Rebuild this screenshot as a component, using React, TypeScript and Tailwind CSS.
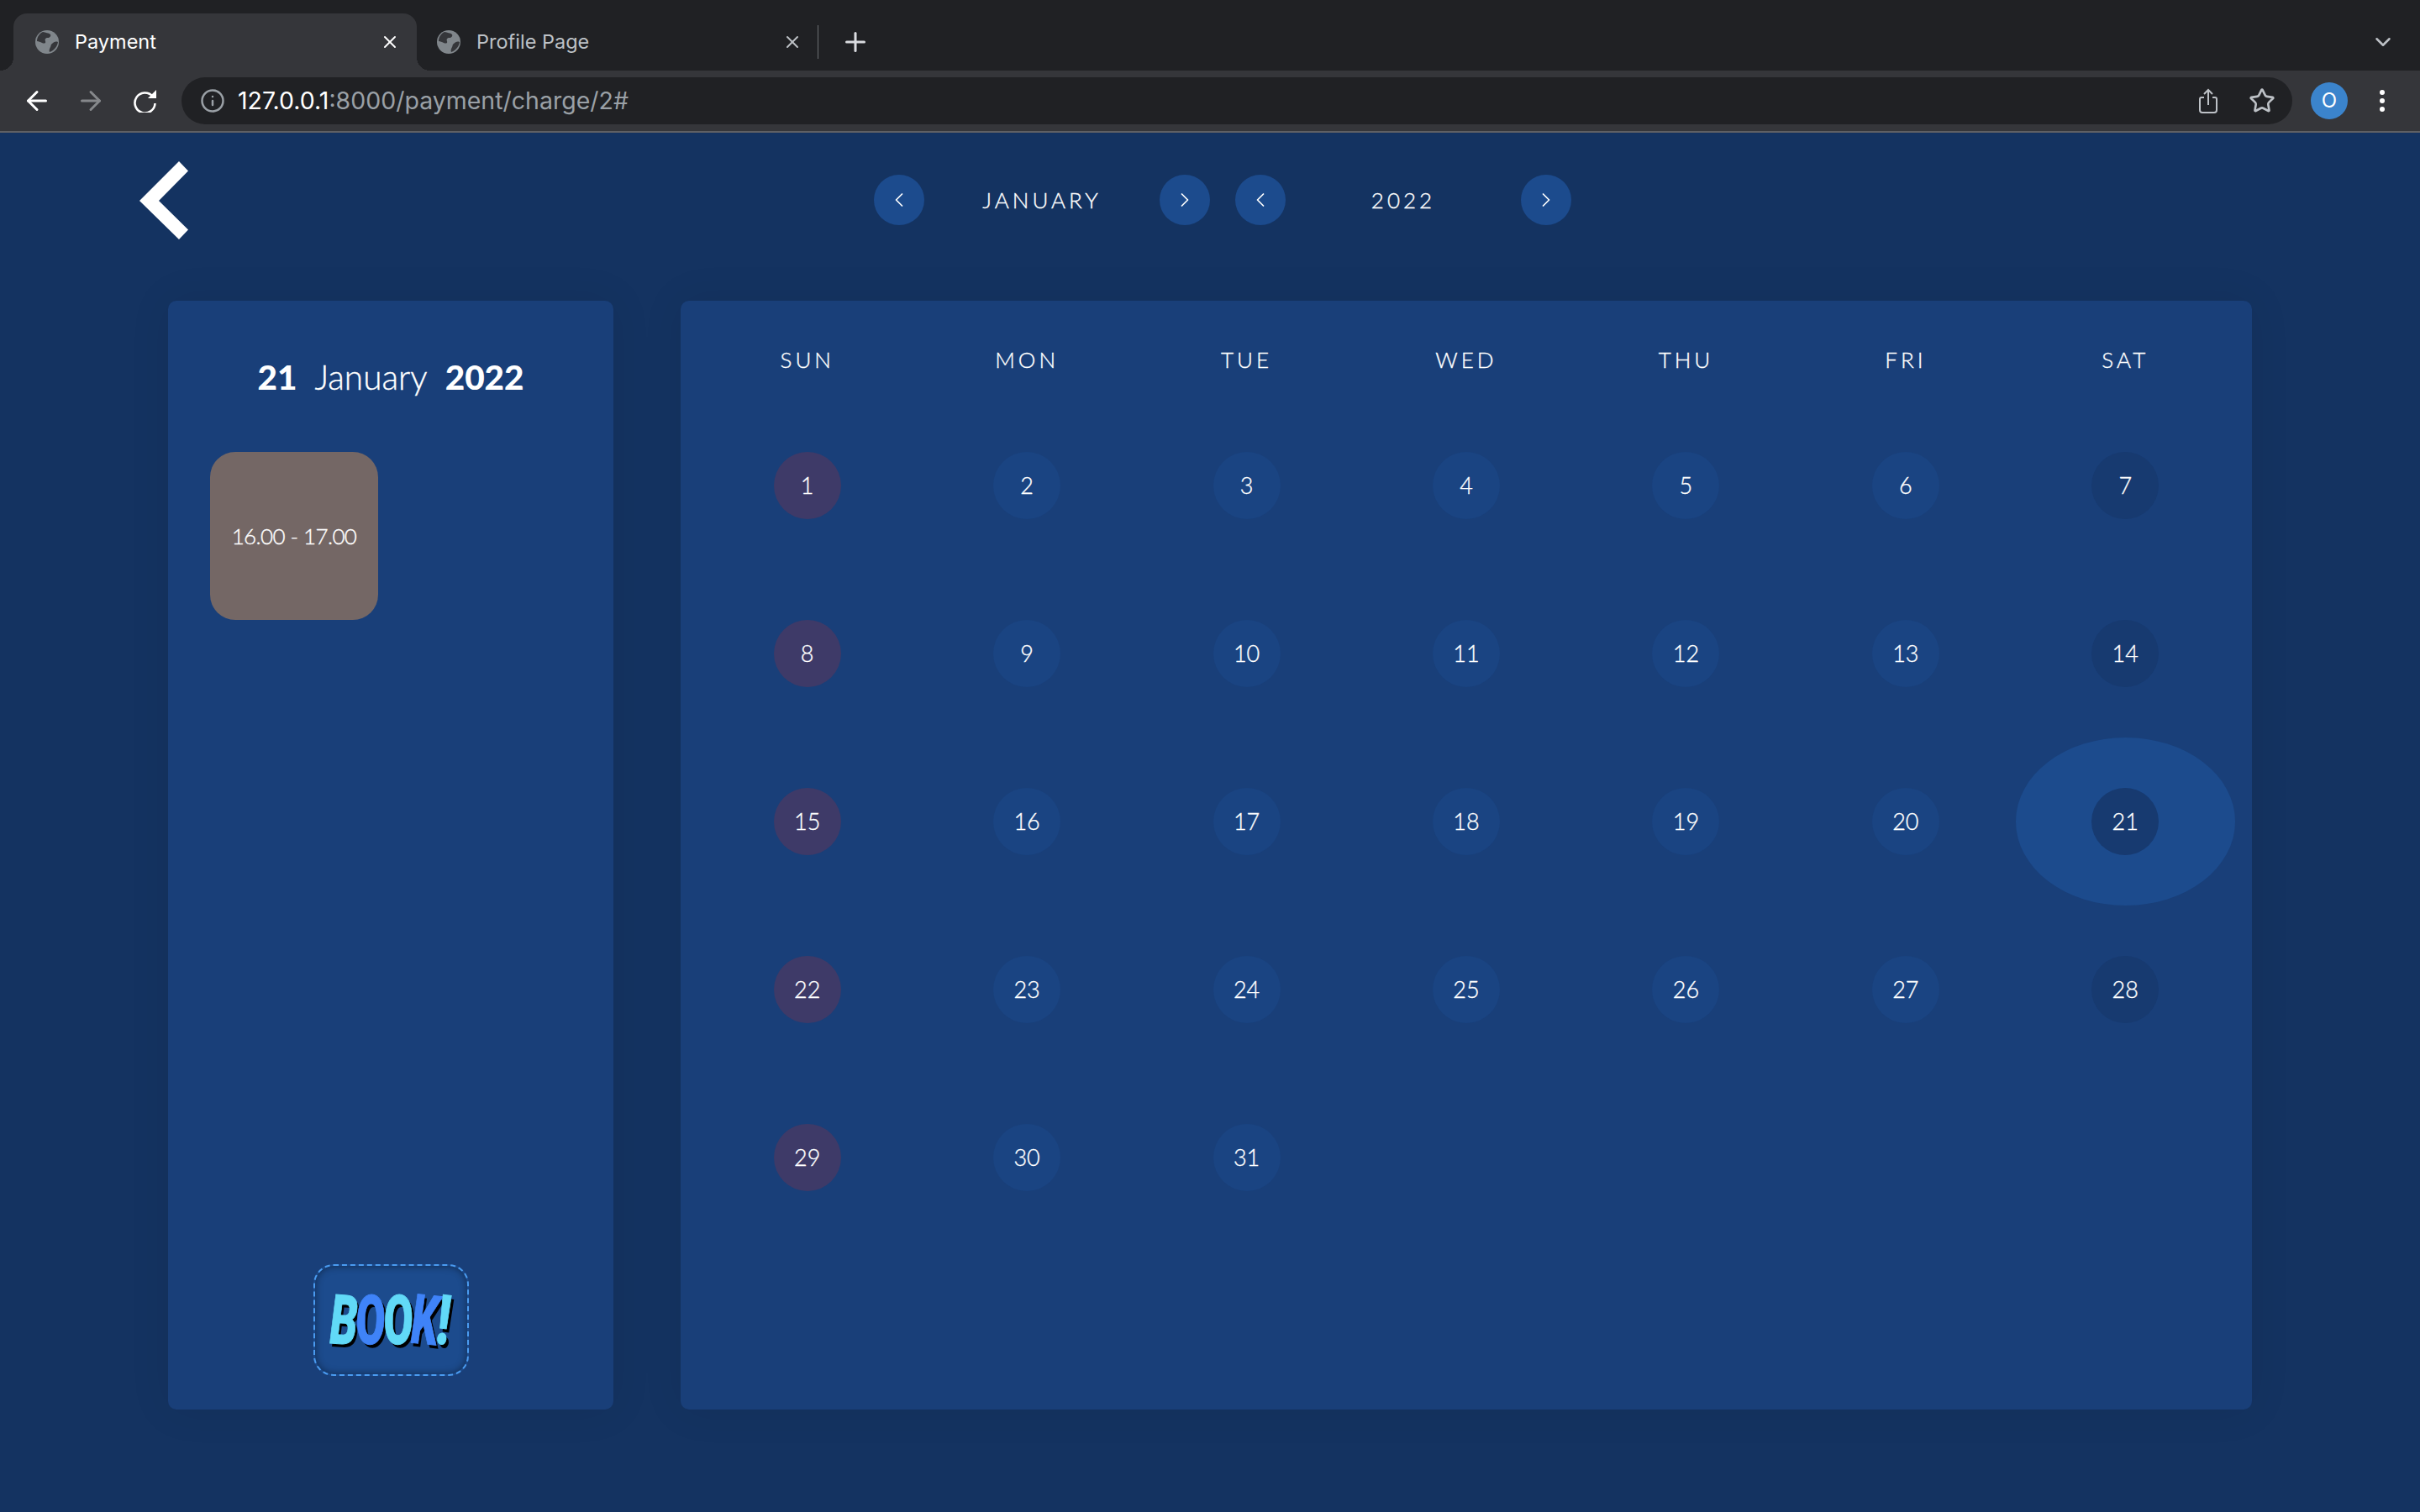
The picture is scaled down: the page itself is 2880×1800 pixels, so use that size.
import { ArrowLeft, ArrowRight, ChevronDown, ChevronLeft, ChevronRight, Info, Plus, Star, X } from "lucide-react";

const Favicon = () => (
  <svg viewBox="0 0 28 28" className="w-7 h-7 shrink-0">
    <circle cx="14" cy="14" r="14" fill="#80868b" />
    <path d="M9 2c3 1 7 1 9 3 1 2-1 4-3 4-3 0-4 2-3 4 1 3-2 3-4 2-2-1-4-2-6-2 0-5 3-9 7-11z" fill="#35363a" />
    <path d="M27 14c-1 6-5 10-10 12-1-2 0-4 1-6 1-1 0-3 2-4 2-2 4-3 7-2z" fill="#35363a" />
  </svg>
);

const ShareIcon = () => (
  <svg viewBox="0 0 22 30" className="w-[22px] h-[30px]" fill="none" stroke="#bdc1c6" strokeWidth="2">
    <path d="M6 11H3a2 2 0 0 0-2 2v13a3 3 0 0 0 3 3h14a3 3 0 0 0 3-3V13a2 2 0 0 0-2-2h-3" />
    <path d="M11 20V2M6 7l5-5 5 5" />
  </svg>
);

const ReloadIcon = () => (
  <svg viewBox="0 0 28 28" className="ml-[33px] w-7 h-7 shrink-0" fill="none">
    <path d="M22.5 8.5A12 12 0 1 0 25.5 17" stroke="#fff" strokeWidth="2.6" />
    <polygon points="27,1 27,11 17,11" fill="#fff" />
  </svg>
);

const NavButton = ({ dir }: { dir: "left" | "right" }) => (
  <button className="w-[60px] h-[60px] rounded-full bg-[#1c4b8d] flex items-center justify-center text-white">
    {dir === "left" ? <ChevronLeft size={28} strokeWidth={1.5} /> : <ChevronRight size={28} strokeWidth={1.5} />}
  </button>
);

const NavGroup = ({ label }: { label: string }) => (
  <div className="w-[400px] flex items-center justify-between">
    <NavButton dir="left" />
    <span className="text-[26px] font-light tracking-[4px] text-white [-webkit-text-stroke:0.35px_#fff]">{label}</span>
    <NavButton dir="right" />
  </div>
);

const days = ["SUN", "MON", "TUE", "WED", "THU", "FRI", "SAT"];
const dates = Array.from({ length: 31 }, (_, i) => i + 1);

const dayColor = (i: number) => {
  if (i % 7 === 0) return "bg-[#3e3a68]";
  if (i % 7 === 6) return "bg-[#173a70]";
  return "bg-[#1a4482]";
};

const Tab = ({ title, active }: { title: string; active?: boolean }) => (
  <div
    className={
      active
        ? "relative w-[480px] h-[68px] rounded-t-[16px] bg-[#35363a] flex items-center pl-[26px] pr-5 text-white before:absolute before:bottom-0 before:-left-4 before:w-4 before:h-4 before:bg-[radial-gradient(circle_at_0_0,transparent_16px,#35363a_16px)] after:absolute after:bottom-0 after:-right-4 after:w-4 after:h-4 after:bg-[radial-gradient(circle_at_100%_0,transparent_16px,#35363a_16px)]"
        : "w-[477px] h-[68px] flex items-center pl-6 pr-[18px] text-[#bdc1c6]"
    }
  >
    <Favicon />
    <span className="ml-[19px] text-[23.5px] flex-1">{title}</span>
    <X size={24} strokeWidth={2} />
  </div>
);

export default function App() {
  return (
    <div className="w-[2880px] h-[1800px] overflow-hidden flex flex-col [font-family:Lato,sans-serif] bg-[#143361]">
      <div className="[font-family:Inter,sans-serif]">
        <div className="h-[84px] bg-[#202124] pl-4 pt-4 flex items-center">
          <Tab title="Payment" active />
          <Tab title="Profile Page" />
          <div className="w-px h-10 bg-[#6b6d70]" />
          <Plus size={36} strokeWidth={2} className="ml-[26px] text-[#dadce0]" />
          <ChevronDown size={30} strokeWidth={2} className="ml-auto mr-[29px] text-[#bdc1c6]" />
        </div>
        <div className="h-[74px] bg-[#35363a] border-b-2 border-[#5f6064] flex items-center pl-[26px] pr-[42px]">
          <ArrowLeft size={36} strokeWidth={2} className="text-white" />
          <ArrowRight size={36} strokeWidth={2} className="ml-7 text-[#86888b]" />
          <ReloadIcon />
          <div className="ml-[29px] flex-1 h-14 rounded-full bg-[#202124] flex items-center pl-[22px] pr-5">
            <Info size={30} strokeWidth={2} className="text-[#9aa0a6]" />
            <span className="ml-[15px] text-[28.5px] text-white">
              127.0.0.1<span className="text-[#9aa0a6]">:8000/payment/charge/2#</span>
            </span>
            <div className="ml-auto flex items-center gap-[37px]">
              <ShareIcon />
              <Star size={32} strokeWidth={2} className="text-[#bdc1c6]" />
            </div>
          </div>
          <div className="ml-[22px] w-11 h-11 rounded-full bg-[#3b84cc] text-white text-[24px] flex items-center justify-center">O</div>
          <div className="ml-[38px] flex flex-col gap-[4px]">
            <span className="w-[6px] h-[6px] rounded-full bg-white" />
            <span className="w-[6px] h-[6px] rounded-full bg-white" />
            <span className="w-[6px] h-[6px] rounded-full bg-white" />
          </div>
        </div>
      </div>

      <div className="flex-1 text-white">
        <div className="h-[160px] mb-10 flex items-center pl-[166px]">
          <svg viewBox="0 0 58 93" className="w-[58px] h-[93px]">
            <polygon points="47,0 58,11.5 23,47 58,81.5 47,93 0,47" fill="#fff" />
          </svg>
          <div className="ml-[816px] flex gap-[30px]">
            <NavGroup label="JANUARY" />
            <NavGroup label="2022" />
          </div>
        </div>

        <div className="flex gap-20 px-[200px]">
          <aside className="w-[530px] h-[1320px] rounded-[10px] bg-[#193f79] shadow-[0_0_50px_rgba(0,0,0,0.08)] flex flex-col">
            <h2 className="mt-[46px] text-center text-[40.5px] font-light leading-[90px]">
              <span className="font-black">21</span>
              <span className="mx-[21px] [-webkit-text-stroke:0.35px_#fff]">January</span>
              <span className="font-black">2022</span>
            </h2>
            <div className="mt-[44px] ml-[50px] w-[200px] h-[200px] rounded-[30px] bg-[#746765] flex items-center justify-center text-[26px] font-light tracking-[-0.6px] [-webkit-text-stroke:0.35px_#fff]">
              16.00 - 17.00
            </div>
            <button className="mt-auto mb-10 self-center w-[185px] h-[133px] rounded-[24px] border-2 border-dashed border-[#4a9bf0] bg-[#1c4b8d] shadow-[inset_0_0_10px_rgba(0,0,0,0.45)] flex items-center justify-center [font-family:Roboto,sans-serif] text-[82px] font-black leading-none [text-shadow:5px_4px_0_#000] [-webkit-text-stroke:1px_currentColor]">
              <span className="inline-block scale-x-[0.62] -mx-[11px] rotate-[4deg] -skew-x-[5deg] text-[#61d9f7]">B</span>
              <span className="inline-block scale-x-[0.62] -mx-[12px] -skew-x-[3deg] text-[#3f83f8]">O</span>
              <span className="inline-block scale-x-[0.62] -mx-[12px] -skew-x-[3deg] text-[#61d9f7]">O</span>
              <span className="inline-block scale-x-[0.62] -mx-[11px] rotate-[6deg] -skew-x-[3deg] text-[#3f83f8]">K</span>
              <span className="inline-block scale-x-[0.7] -mx-[4px] rotate-[7deg] text-[#61d9f7]">!</span>
            </button>
          </aside>

          <main className="w-[1870px] h-[1320px] rounded-[10px] bg-[#193f79] shadow-[0_0_50px_rgba(0,0,0,0.08)] px-5 pt-5">
            <div className="grid grid-cols-7 h-[100px] items-center text-center text-[26px] font-light tracking-[4px] [-webkit-text-stroke:0.35px_#fff]">
              {days.map((d) => (
                <div key={d}>{d}</div>
              ))}
            </div>
            <div className="grid grid-cols-7 auto-rows-[200px]">
              {dates.map((n, i) => (
                <div
                  key={n}
                  className={n === 21 ? "flex items-center justify-center rounded-[50%] bg-[#1c4b8d]" : "flex items-center justify-center"}
                >
                  <div className={"w-20 h-20 rounded-full flex items-center justify-center text-[27px] font-light [-webkit-text-stroke:0.35px_#fff] " + dayColor(i)}>{n}</div>
                </div>
              ))}
            </div>
          </main>
        </div>
      </div>
    </div>
  );
}
